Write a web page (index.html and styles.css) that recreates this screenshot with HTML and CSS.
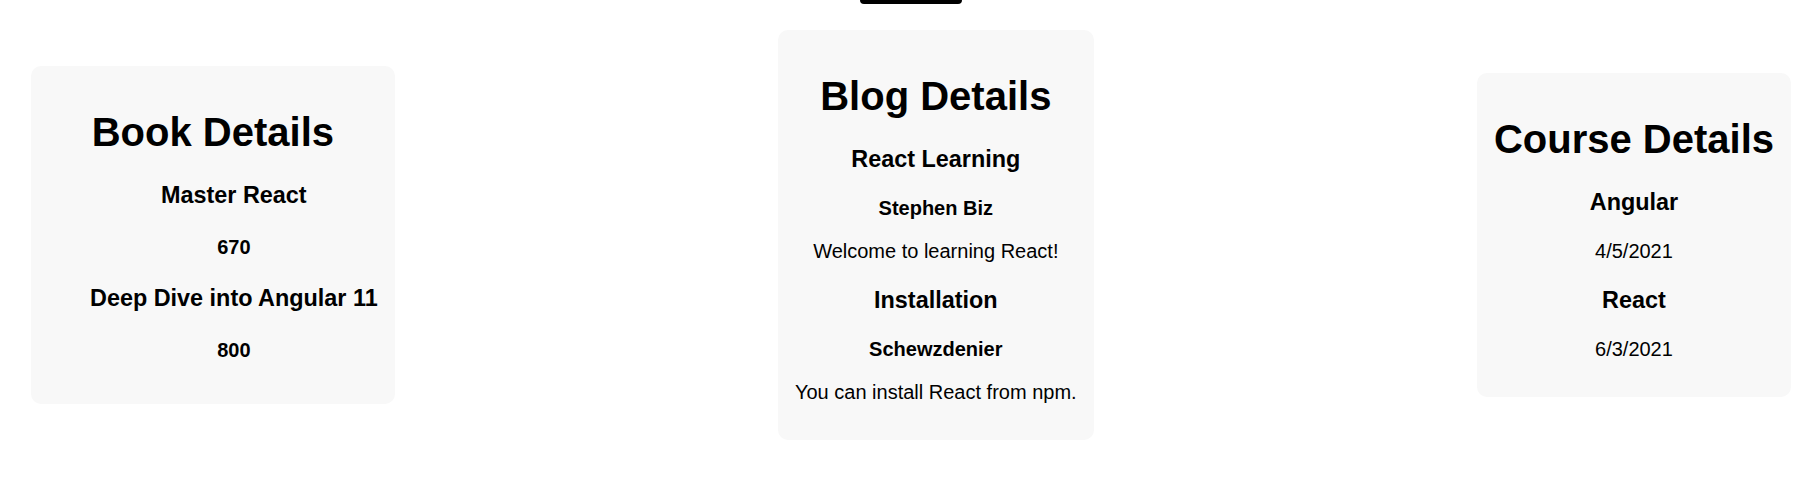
FILE: index.html
```html
<!DOCTYPE html>
<html lang="en">
<head>
<meta charset="utf-8">
<title>Details</title>
<link rel="stylesheet" href="styles.css">
</head>
<body>
<div class="topbar"><div class="btn-stub"></div></div>
<main class="row">
  <section class="card">
    <h1 class="title">Book Details</h1>
    <ul class="list indented">
      <li><h3 class="name">Master React</h3><h4 class="num">670</h4></li>
      <li><h3 class="name">Deep Dive into Angular 11</h3><h4 class="num">800</h4></li>
    </ul>
  </section>
  <section class="card">
    <h1 class="title">Blog Details</h1>
    <div class="list">
      <h3 class="name">React Learning</h3>
      <h4 class="author">Stephen Biz</h4>
      <p class="text">Welcome to learning React!</p>
      <h3 class="name">Installation</h3>
      <h4 class="author">Schewzdenier</h4>
      <p class="text">You can install React from npm.</p>
    </div>
  </section>
  <section class="card">
    <h1 class="title">Course Details</h1>
    <div class="list">
      <h3 class="name">Angular</h3>
      <p class="text">4/5/2021</p>
      <h3 class="name">React</h3>
      <p class="text">6/3/2021</p>
    </div>
  </section>
</main>
</body>
</html>
```
FILE: styles.css
```css
html, body {
  margin: 0;
  padding: 0;
  background: #ffffff;
  color: #000000;
  font-family: "Liberation Sans", Arial, sans-serif;
}

.topbar {
  display: flex;
  justify-content: center;
  padding-left: 4px;
}

.btn-stub {
  width: 102px;
  height: 4px;
  background: #000000;
  border-radius: 0 0 8px 8px;
}

.row {
  display: flex;
  justify-content: space-between;
  align-items: center;
  padding: 26px 27px 0 31px;
}

.card {
  background: #f8f8f8;
  border-radius: 10px;
  padding: 16px 17px;
  text-align: center;
}

.title {
  font-size: 40px;
  line-height: 46px;
  font-weight: bold;
  margin: 27px 0;
}

.list {
  margin: 0;
  padding: 0;
  list-style: none;
}

.list.indented {
  padding-left: 42px;
}

.name {
  font-size: 23.4px;
  line-height: 27px;
  font-weight: bold;
  margin: 24px 0;
}

.num {
  font-size: 20px;
  line-height: 23px;
  font-weight: bold;
  margin: 26.5px 0;
}

.author {
  font-size: 20px;
  line-height: 23px;
  font-weight: bold;
  margin: 20px 0;
}

.text {
  font-size: 20px;
  line-height: 23px;
  margin: 20px 0;
}
```
